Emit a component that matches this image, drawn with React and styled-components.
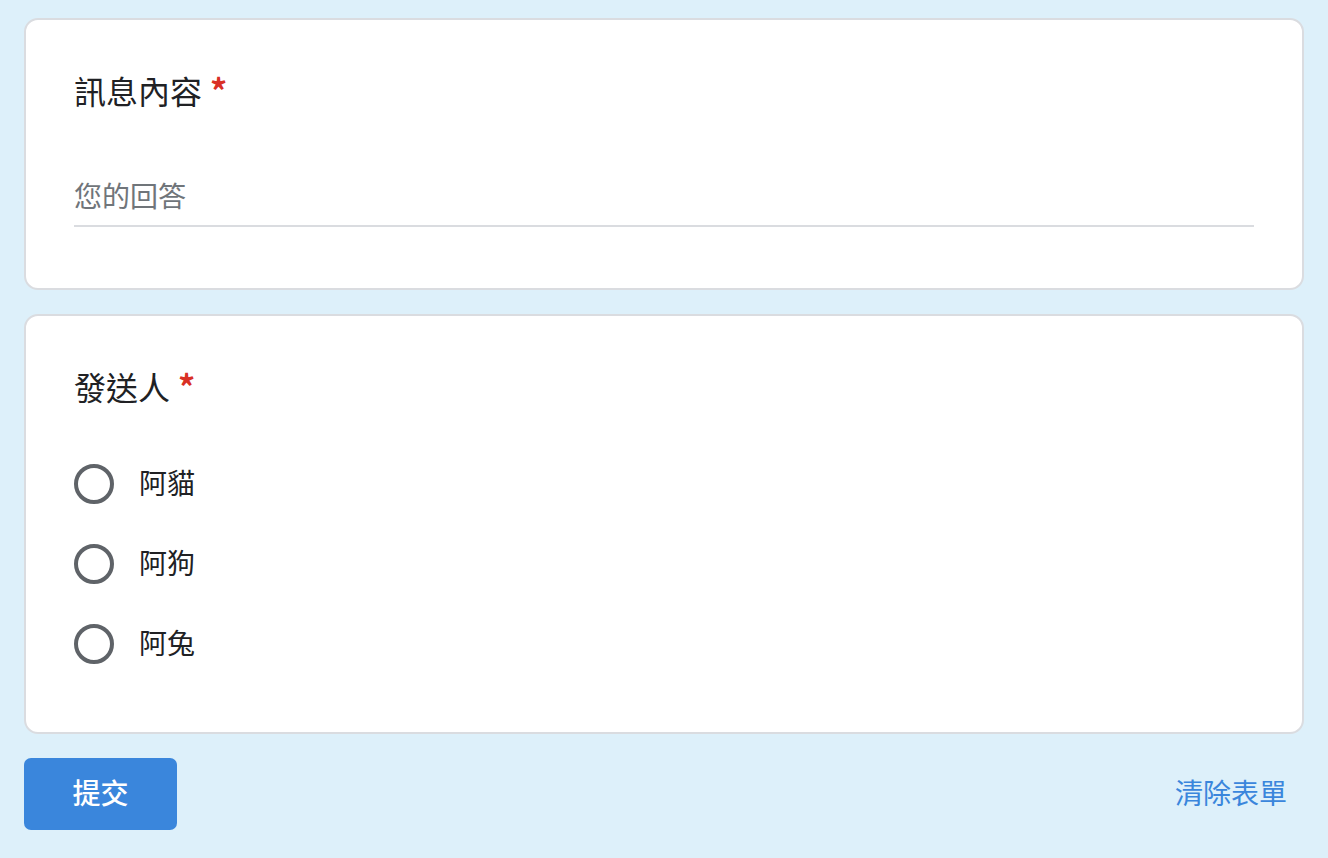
import React from "react";
import styled, { createGlobalStyle } from "styled-components";

const GlobalStyle = createGlobalStyle`
  body {
    margin: 0;
    background: #ddf0fa;
    font-family: "Noto Sans CJK TC", "Noto Sans", sans-serif;
  }
`;

const Page = styled.div`
  display: flex;
  flex-direction: column;
  gap: 24px;
  padding: 18px 24px;
  width: 1280px;
`;

const Card = styled.div`
  background: #ffffff;
  border: 2px solid #dadce0;
  border-radius: 14px;
  padding: 48px 48px ${(p) => p.$bottom || 48}px;
`;

const Title = styled.div`
  font-size: 32px;
  line-height: 44px;
  padding-bottom: 4px;
  color: #202124;
  display: flex;
  align-items: center;
`;

const Star = styled.span`
  color: #d93025;
  margin-left: 8px;
  font-size: 34px;
  font-weight: 700;
`;

const AnswerInput = styled.div`
  margin-top: 59px;
  padding-bottom: 10px;
  border-bottom: 2px solid #dadce0;
  font-size: 28px;
  line-height: 40px;
  color: #70757a;
`;

const Options = styled.div`
  margin-top: 32px;
  display: flex;
  flex-direction: column;
`;

const Option = styled.label`
  height: 80px;
  display: flex;
  align-items: center;
  gap: 25px;
  font-size: 28px;
  color: #202124;
`;

const OptionText = styled.span`
  line-height: 38px;
  padding-bottom: 4px;
`;

const Radio = styled.span`
  width: 40px;
  height: 40px;
  box-sizing: border-box;
  border: 4px solid #5f6368;
  border-radius: 50%;
`;

const Footer = styled.div`
  display: flex;
  justify-content: space-between;
  align-items: center;
`;

const SubmitButton = styled.button`
  width: 153px;
  height: 72px;
  border: none;
  border-radius: 7px;
  background: #3a86dc;
  color: #ffffff;
  font-family: inherit;
  font-size: 28px;
  font-weight: 500;
  padding: 0 0 4px;
`;

const ClearLink = styled.span`
  color: #3a86dc;
  font-size: 28px;
  line-height: 38px;
  padding-bottom: 4px;
  margin-right: 17px;
`;

const options = ["阿貓", "阿狗", "阿兔"];

const App = () => (
  <>
    <GlobalStyle />
    <Page>
      <Card $bottom={61}>
        <Title>
          訊息內容<Star>*</Star>
        </Title>
        <AnswerInput>您的回答</AnswerInput>
      </Card>
      <Card>
        <Title>
          發送人<Star>*</Star>
        </Title>
        <Options>
          {options.map((o) => (
            <Option key={o}>
              <Radio />
              <OptionText>{o}</OptionText>
            </Option>
          ))}
        </Options>
      </Card>
      <Footer>
        <SubmitButton>提交</SubmitButton>
        <ClearLink>清除表單</ClearLink>
      </Footer>
    </Page>
  </>
);

export default App;
